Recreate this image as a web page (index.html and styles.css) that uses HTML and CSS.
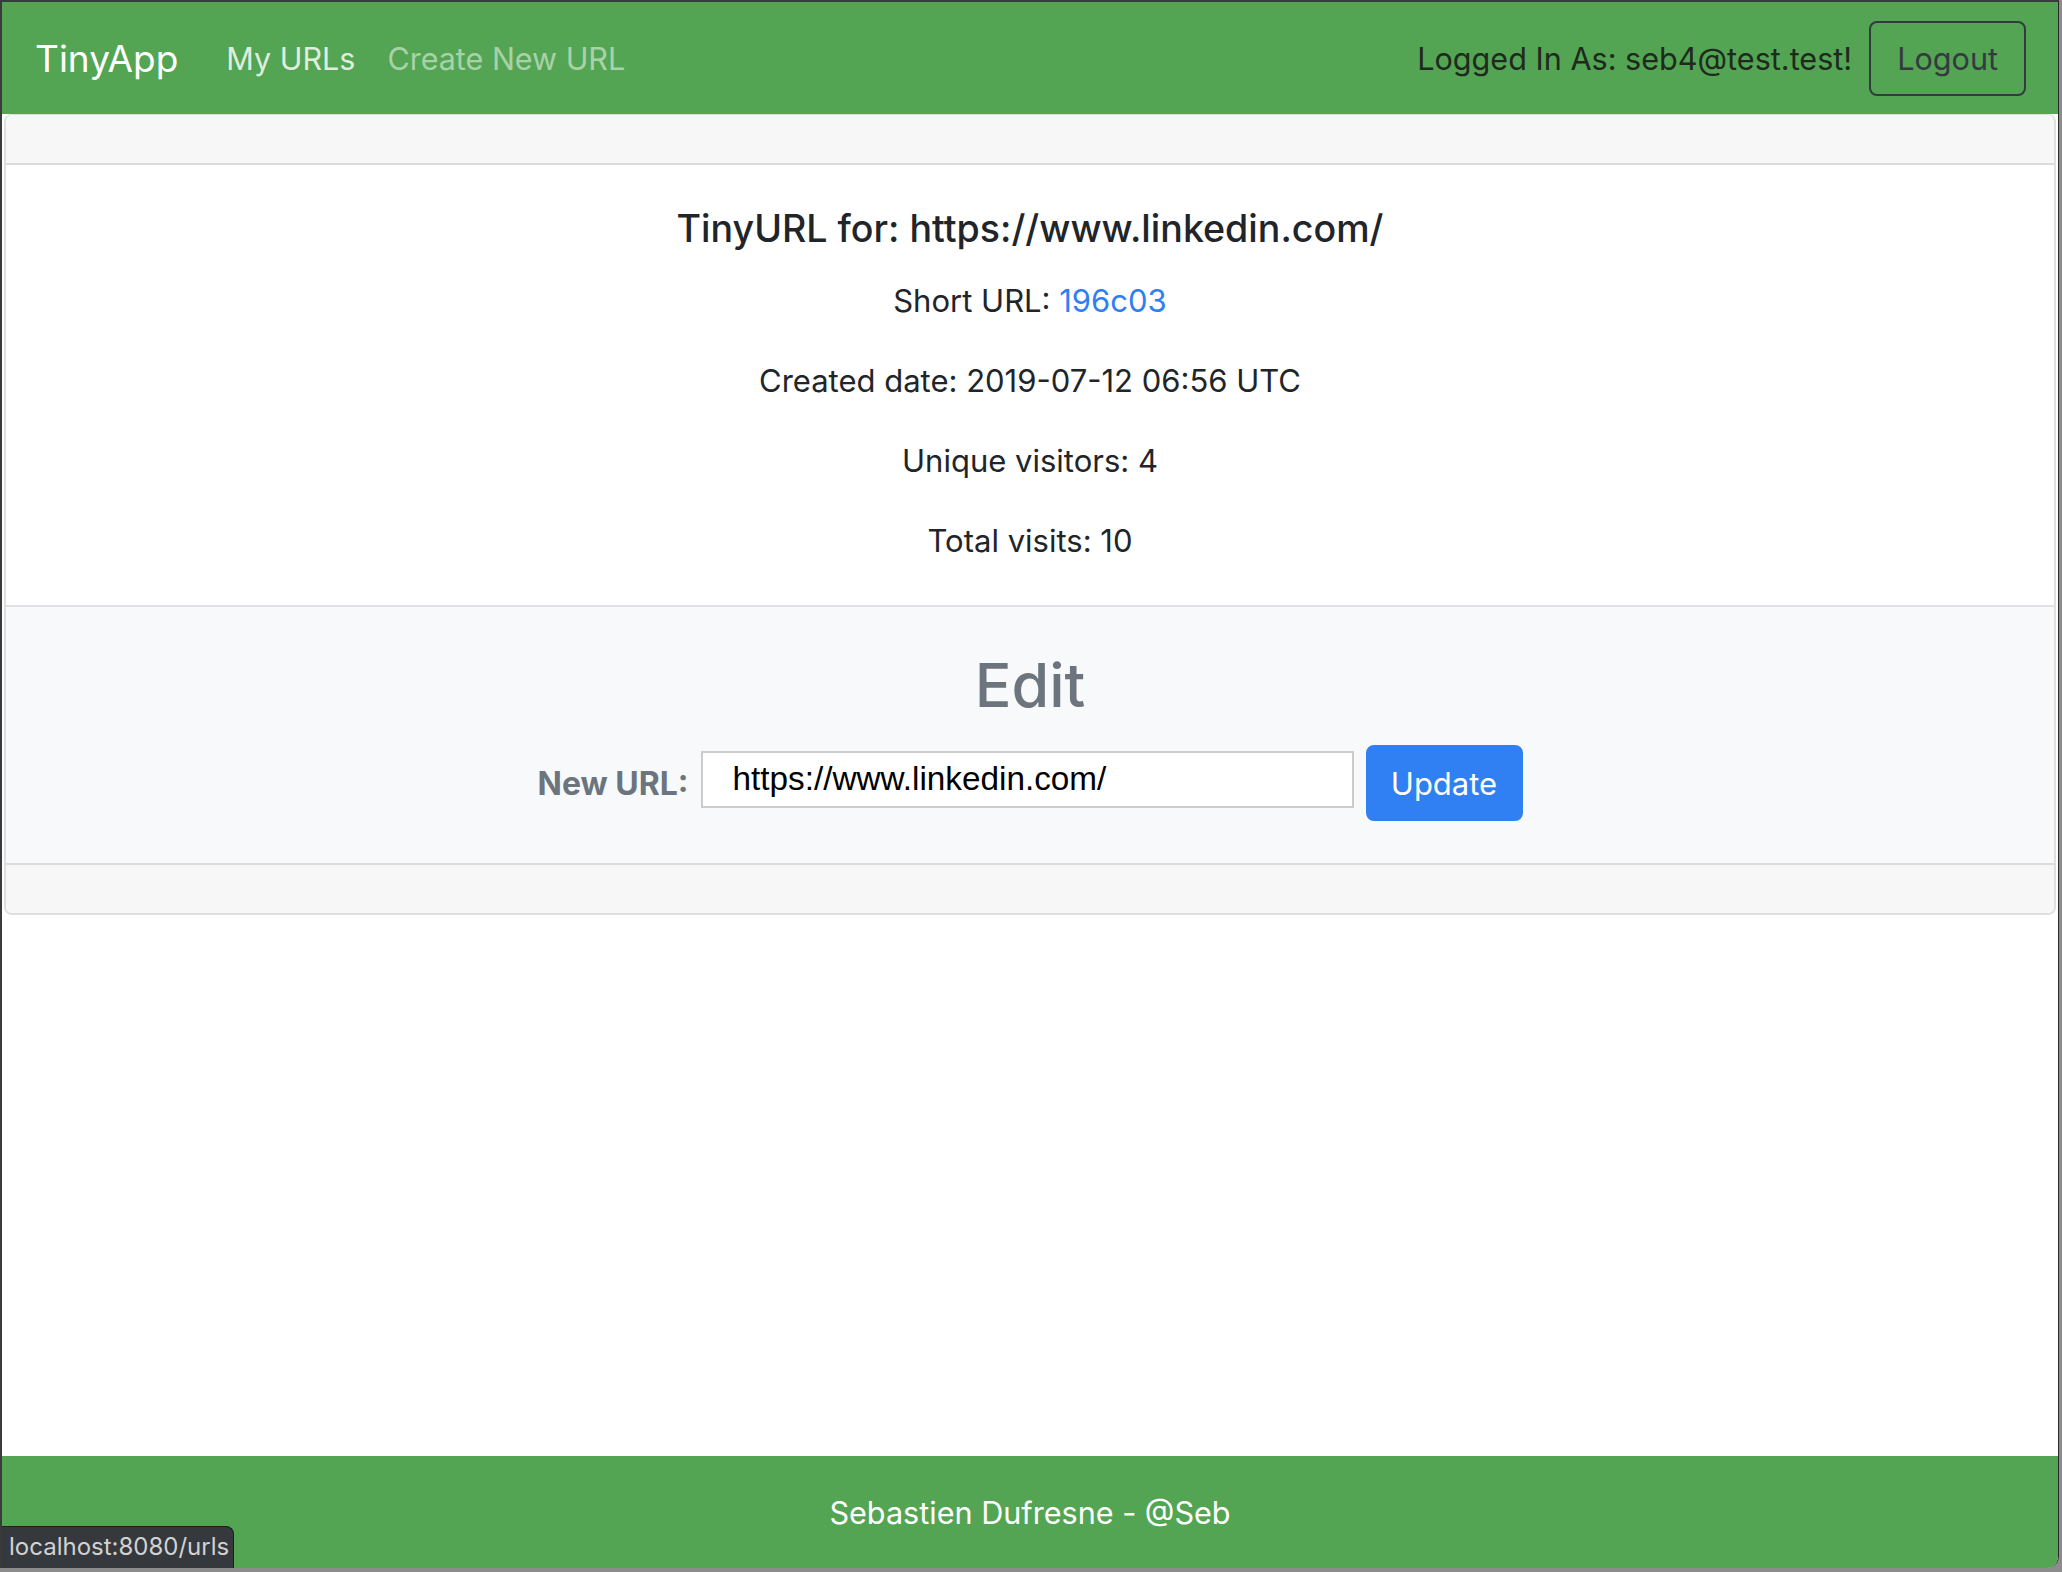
FILE: index.html
```html
<!DOCTYPE html>
<html lang="en">
<head>
<meta charset="utf-8">
<title>TinyApp</title>
<link rel="stylesheet" href="styles.css">
</head>
<body>
<div class="window">
  <nav class="navbar">
    <a class="brand" href="#">TinyApp</a>
    <ul class="nav">
      <li><a class="nav-link active" href="#">My URLs</a></li>
      <li><a class="nav-link" href="#">Create New URL</a></li>
    </ul>
    <div class="nav-right">
      <span class="navbar-text">Logged In As: seb4@test.test!</span>
      <button class="btn-logout" type="button">Logout</button>
    </div>
  </nav>
  <main class="main">
    <div class="card">
      <div class="card-header"></div>
      <div class="card-body">
        <h5 class="card-title">TinyURL for: https://www.linkedin.com/</h5>
        <p class="card-text">Short URL: <a class="short-link" href="#">196c03</a></p>
        <p class="card-text">Created date: 2019-07-12 06:56 UTC</p>
        <p class="card-text">Unique visitors: 4</p>
        <p class="card-text">Total visits: 10</p>
      </div>
      <div class="edit-section">
        <h2 class="edit-title">Edit</h2>
        <form class="edit-form">
          <label class="edit-label" for="longURL">New URL:</label>
          <input class="edit-input" id="longURL" type="text" value="https://www.linkedin.com/">
          <button class="btn-update" type="button">Update</button>
        </form>
      </div>
      <div class="card-footer"></div>
    </div>
  </main>
  <footer class="footer">Sebastien Dufresne - @Seb</footer>
  <div class="status">localhost:8080/urls</div>
</div>
</body>
</html>
```
FILE: styles.css
```css
html, body {
  margin: 0;
  padding: 0;
}
body {
  background: #8c8c8c;
  width: 2062px;
  height: 1572px;
  overflow: hidden;
  font-family: Inter, "Noto Sans", sans-serif;
  color: #212529;
}
.window {
  position: relative;
  box-sizing: border-box;
  width: 2059px;
  height: 1568px;
  border-top: 2px solid #3a3a3a;
  border-left: 2px solid #3a3a3a;
  border-right: 1px solid #2a2a2a;
  border-bottom-right-radius: 12px;
  background: #ffffff;
  display: flex;
  flex-direction: column;
  overflow: hidden;
}
.navbar {
  height: 112px;
  flex: none;
  background: #53a553;
  display: flex;
  align-items: center;
  padding: 0 32px 0 33px;
}
.brand {
  font-size: 37px;
  color: #ffffff;
  text-decoration: none;
  margin-right: 32px;
  line-height: 1;
}
.nav {
  list-style: none;
  margin: 0;
  padding: 0;
  display: flex;
}
.nav-link {
  display: block;
  padding: 0 16px;
  font-size: 30.5px;
  color: rgba(255, 255, 255, 0.5);
  text-decoration: none;
}
.nav-link.active {
  color: rgba(255, 255, 255, 0.82);
}
.nav-right {
  margin-left: auto;
  display: flex;
  align-items: center;
  gap: 17px;
}
.navbar-text {
  font-size: 30.6px;
  color: #1f2a1f;
}
.btn-logout {
  font-family: inherit;
  font-size: 30.6px;
  color: #343a40;
  background: transparent;
  border: 2px solid #343a40;
  border-radius: 8px;
  height: 75px;
  padding: 0 26px;
}
.main {
  flex: 1;
}
.card {
  margin: 0 2px;
  border: 2px solid #dfdfdf;
  border-top: 1px solid #dcdcdc;
  border-radius: 8px;
  overflow: hidden;
  background: #ffffff;
}
.card-header {
  height: 48px;
  background: #f7f7f7;
  border-bottom: 2px solid #dcdcdc;
}
.card-body {
  padding: 40px;
  text-align: center;
}
.card-title {
  margin: 0 0 24px;
  font-size: 37.6px;
  font-weight: 500;
  line-height: 48px;
}
.card-text {
  margin: 0 0 32px;
  font-size: 31px;
  line-height: 48px;
}
.card-text:last-child {
  margin-bottom: 0;
}
.short-link {
  color: #2f7ff3;
  text-decoration: none;
}
.edit-section {
  background: #f8f9fa;
  border-top: 2px solid #e0e2e6;
  padding: 40px 0 42px;
  text-align: center;
}
.edit-title {
  margin: 0 0 22px;
  font-size: 61px;
  font-weight: 500;
  line-height: 76px;
  color: #6c757d;
}
.edit-form {
  display: flex;
  justify-content: center;
  align-items: center;
}
.edit-label {
  font-size: 32px;
  font-weight: 700;
  color: #6c757d;
  margin-right: 12px;
}
.edit-input {
  box-sizing: border-box;
  width: 653px;
  height: 57px;
  margin: 0 12px 0 0;
  padding: 0 0 0 30px;
  border: 2px solid #cccccc;
  border-radius: 0;
  background: #ffffff;
  font-family: "Liberation Sans", Arial, sans-serif;
  font-size: 33.3px;
  color: #000000;
  position: relative;
  top: -4px;
}
.btn-update {
  font-family: inherit;
  font-size: 31px;
  color: #ffffff;
  background: #3080f3;
  border: 2px solid #3080f3;
  border-radius: 8px;
  height: 76px;
  width: 157px;
  padding: 0;
}
.card-footer {
  height: 48px;
  background: #f7f7f7;
  border-top: 2px solid #dcdcdc;
}
.footer {
  flex: none;
  height: 112px;
  background: #53a553;
  color: #ffffff;
  font-size: 30.6px;
  display: flex;
  align-items: center;
  justify-content: center;
}
.status {
  position: absolute;
  left: 0;
  bottom: 0;
  box-sizing: border-box;
  width: 232px;
  height: 42px;
  background: #35383c;
  border-top: 1px solid #1e1e1e;
  border-right: 1px solid #1e1e1e;
  border-top-right-radius: 8px;
  color: #d2d2d2;
  font-size: 24px;
  line-height: 40px;
  padding-left: 7px;
  white-space: nowrap;
}
```
